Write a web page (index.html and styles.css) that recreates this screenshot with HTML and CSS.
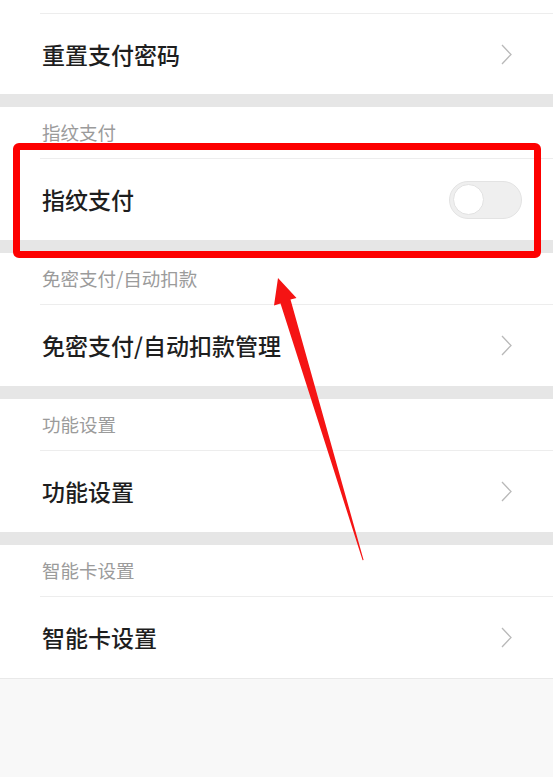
FILE: index.html
```html
<!DOCTYPE html>
<html lang="zh-CN">
<head>
<meta charset="utf-8">
<title>支付设置</title>
<link rel="stylesheet" href="styles.css">
</head>
<body>
<div class="page">
  <div class="group">
    <div class="topline"></div>
    <div class="row">
      <span class="title">重置支付密码</span>
      <svg class="chev" viewBox="0 0 11 21" width="11" height="21"><path d="M1 1 L10 10.5 L1 20" /></svg>
    </div>
  </div>
  <div class="band"></div>
  <div class="group">
    <div class="header">指纹支付</div>
    <div class="row">
      <span class="title">指纹支付</span>
      <span class="toggle"><span class="knob"></span></span>
    </div>
  </div>
  <div class="band"></div>
  <div class="group">
    <div class="header">免密支付/自动扣款</div>
    <div class="row">
      <span class="title">免密支付/自动扣款管理</span>
      <svg class="chev" viewBox="0 0 11 21" width="11" height="21"><path d="M1 1 L10 10.5 L1 20" /></svg>
    </div>
  </div>
  <div class="band"></div>
  <div class="group">
    <div class="header">功能设置</div>
    <div class="row">
      <span class="title">功能设置</span>
      <svg class="chev" viewBox="0 0 11 21" width="11" height="21"><path d="M1 1 L10 10.5 L1 20" /></svg>
    </div>
  </div>
  <div class="band"></div>
  <div class="group">
    <div class="header">智能卡设置</div>
    <div class="row">
      <span class="title">智能卡设置</span>
      <svg class="chev" viewBox="0 0 11 21" width="11" height="21"><path d="M1 1 L10 10.5 L1 20" /></svg>
    </div>
  </div>
  <div class="tail"></div>

  <div class="highlight"></div>
  <svg class="arrow" viewBox="0 0 553 777" width="553" height="777">
    <polygon points="278,278 296.5,298 290.5,299.5 363.6,560 362.6,560.3 280.5,303.5 274,305.5" />
  </svg>
</div>
</body>
</html>
```
FILE: styles.css
```css
html, body {
  margin: 0;
  padding: 0;
  background: #ffffff;
}

.page {
  position: relative;
  width: 553px;
  height: 777px;
  overflow: hidden;
  display: flex;
  flex-direction: column;
  background: #ffffff;
  font-family: "Noto Sans CJK SC", "Noto Sans", sans-serif;
}

.group {
  padding-left: 40px;
  background: #ffffff;
}

.topline {
  height: 13px;
  border-bottom: 1px solid #ededed;
}

.header {
  height: 51px;
  border-bottom: 1px solid #ededed;
  display: flex;
  align-items: center;
  padding-left: 2px;
  font-size: 18.5px;
  color: #9b9b9b;
  line-height: 1;
}

.row {
  height: 81px;
  display: flex;
  align-items: center;
  justify-content: space-between;
  padding-left: 2px;
  padding-right: 31px;
}

.topline + .row {
  height: 80px;
}

.title {
  font-size: 23px;
  font-weight: 500;
  color: #1e1e1e;
  line-height: 1;
}

.chev {
  margin-right: 10px;
  fill: none;
  stroke: #b9b9b9;
  stroke-width: 1.3;
}

.toggle {
  width: 73px;
  height: 38px;
  box-sizing: border-box;
  border-radius: 19px;
  background: #efefef;
  border: 1px solid #e3e3e3;
  display: flex;
  align-items: center;
  padding-left: 3px;
}

.knob {
  width: 31px;
  height: 31px;
  box-sizing: border-box;
  border-radius: 50%;
  background: #ffffff;
  border: 1px solid #e2e2e2;
}

.band {
  height: 13px;
  background: #e6e6e6;
}

.tail {
  flex: 1;
  background: #f8f8f8;
  border-top: 1px solid #e9e9e9;
}

.highlight {
  position: absolute;
  left: 13px;
  top: 143px;
  width: 528px;
  height: 115px;
  box-sizing: border-box;
  border: 7px solid #fd0000;
  border-radius: 6px;
}

.arrow {
  position: absolute;
  left: 0;
  top: 0;
  fill: #f51414;
}
```
